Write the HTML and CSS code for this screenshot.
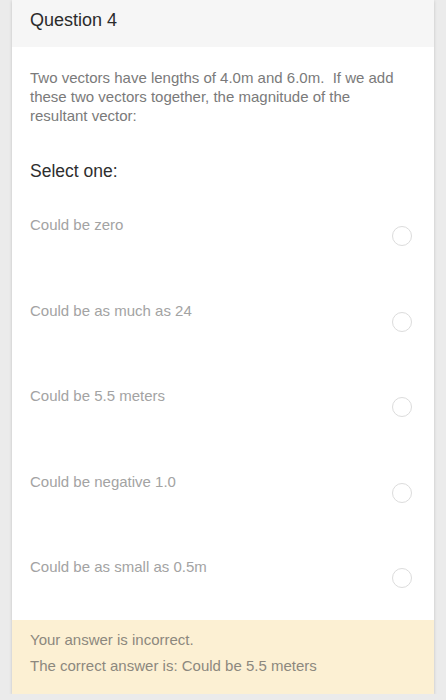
FILE: index.html
```html
<!DOCTYPE html>
<html lang="en">
<head>
  <meta charset="UTF-8" />
  <meta name="viewport" content="width=device-width, initial-scale=1.0" />
  <title>Question 4</title>
  <link rel="stylesheet" href="styles.css">
</head>
<body>
  <!-- Question card -->
  <div class="que">
    <div class="que-header">
      <h3>Question 4</h3>
    </div>

    <div class="que-content">
      <p class="qtext">Two vectors have lengths of 4.0m and 6.0m.&nbsp; If we add these two vectors together, the magnitude of the resultant vector:</p>

      <p class="prompt">Select one:</p>

      <div class="answers">
        <label class="answer">
          <span class="answer-text">Could be zero</span>
          <span class="radio"></span>
        </label>
        <label class="answer">
          <span class="answer-text">Could be as much as 24</span>
          <span class="radio"></span>
        </label>
        <label class="answer">
          <span class="answer-text">Could be 5.5 meters</span>
          <span class="radio"></span>
        </label>
        <label class="answer">
          <span class="answer-text">Could be negative 1.0</span>
          <span class="radio"></span>
        </label>
        <label class="answer">
          <span class="answer-text">Could be as small as 0.5m</span>
          <span class="radio"></span>
        </label>
      </div>
    </div>

    <!-- Feedback -->
    <div class="outcome">
      <p>Your answer is incorrect.</p>
      <p>The correct answer is: Could be 5.5 meters</p>
    </div>
  </div>
</body>
</html>
```

FILE: styles.css
```css
body, html {
  margin: 0;
  padding: 0;
  background-color: #ebebeb;
  font-family: "Liberation Sans", Arial, sans-serif;
}

/* Card */
.que {
  margin: 0 12px;
  background-color: #fff;
  box-shadow: 0 1px 3px rgba(0, 0, 0, 0.18);
}

.que-header {
  background-color: #f6f6f6;
  height: 47px;
  padding: 0 18px;
}

.que-header h3 {
  margin: 0;
  font-weight: normal;
  font-size: 18px;
  line-height: 22px;
  padding-top: 9px;
  color: #2b2b2b;
}

/* Content */
.que-content {
  padding: 21px 18px 30px 18px;
}

.qtext {
  margin: 0;
  font-size: 15px;
  line-height: 19px;
  color: #7a7a7a;
  padding-right: 20px;
}

.prompt {
  margin: 35px 0 0 0;
  font-size: 17.5px;
  line-height: 22px;
  color: #2e2e2e;
}

.answers {
  display: flex;
  flex-direction: column;
  gap: 52.5px;
  margin-top: 33px;
}

.answer {
  display: flex;
  justify-content: space-between;
  align-items: flex-start;
  height: 33px;
}

.answer-text {
  font-size: 15px;
  line-height: 19px;
  color: #a3a3a3;
}

.radio {
  width: 18px;
  height: 18px;
  margin-top: 11px;
  margin-right: 4px;
  border: 1.5px solid #dcdcdc;
  border-radius: 50%;
}

/* Feedback box */
.outcome {
  background-color: #fcf0d3;
  padding: 10px 18px 19px 18px;
}

.outcome p {
  margin: 0;
  font-size: 15px;
  line-height: 19px;
  color: #8c887e;
}

.outcome p + p {
  margin-top: 7px;
}
```
